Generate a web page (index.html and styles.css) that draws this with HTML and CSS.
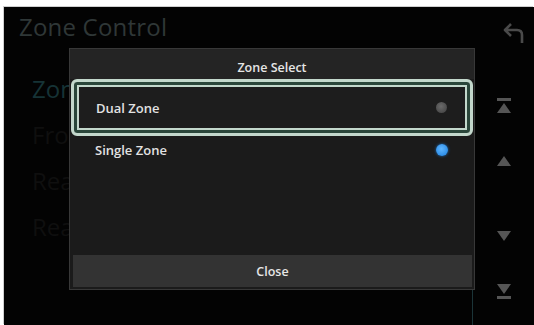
FILE: index.html
```html
<!DOCTYPE html>
<html>
<head>
<meta charset="utf-8">
<link rel="stylesheet" href="styles.css">
</head>
<body>
<div class="screen">
  <header class="topbar">
    <h1 class="title">Zone Control</h1>
    <span class="back">
      <svg width="24" height="24" viewBox="0 0 24 24"><path d="M9 3 L3 9 L9 15 M3 9 H15 Q20 9 20 14 V22" fill="none" stroke="#4a4a4a" stroke-width="2.6" stroke-linejoin="round"/></svg>
    </span>
  </header>
  <div class="main">
    <ul class="list">
      <li class="item item-active">Zone Select</li>
      <li class="item">Front</li>
      <li class="item">Rear</li>
      <li class="item">Rear</li>
    </ul>
    <nav class="side">
      <svg class="ico" width="18" height="18" viewBox="0 0 18 18"><rect x="2" y="1" width="14" height="3" fill="#555"/><path d="M9 6 L16 16 H2 Z" fill="#555"/></svg>
      <svg class="ico" width="18" height="12" viewBox="0 0 18 12"><path d="M9 1 L16 11 H2 Z" fill="#555"/></svg>
      <svg class="ico" width="18" height="12" viewBox="0 0 18 12"><path d="M9 11 L16 1 H2 Z" fill="#555"/></svg>
      <svg class="ico" width="18" height="18" viewBox="0 0 18 18"><path d="M9 12 L16 2 H2 Z" fill="#555"/><rect x="2" y="14" width="14" height="3" fill="#555"/></svg>
    </nav>
  </div>
  <div class="dialog">
    <div class="dlg-head">Zone Select</div>
    <div class="dlg-body">
      <div class="opt opt-sel"><span>Dual Zone</span><span class="dot dot-off"></span></div>
      <div class="opt"><span>Single Zone</span><span class="dot dot-on"></span></div>
    </div>
    <div class="dlg-foot"><span class="close">Close</span></div>
  </div>
</div>
</body>
</html>
```

FILE: styles.css
```css
html, body {
  margin: 0;
  padding: 0;
  background: #ffffff;
}
body {
  width: 534px;
  height: 325px;
  overflow: hidden;
}
.screen {
  position: relative;
  margin: 7px 0 0 4px;
  width: 530px;
  height: 318px;
  background: #030303;
  box-shadow: -1px -1px 0 #cfcfcf;
  display: flex;
  flex-direction: column;
  font-family: "Open Sans", "Noto Sans", sans-serif;
  overflow: hidden;
}
.topbar {
  height: 41px;
  display: flex;
  align-items: center;
  justify-content: space-between;
  padding: 0 8px 0 15px;
  box-sizing: border-box;
}
.title {
  margin: 0;
  font-weight: 400;
  font-size: 24px;
  color: #2f3737;
  letter-spacing: 0.2px;
  line-height: 1;
  margin-top: -2px;
}
.back {
  display: flex;
  margin-top: 10px;
}
.main {
  flex: 1;
  display: flex;
}
.list {
  list-style: none;
  margin: 0;
  padding: 24px 0 0 28px;
  width: 440px;
  border-right: 1px solid #1b3438;
  display: flex;
  flex-direction: column;
  gap: 12px;
}
.item {
  width: 37px;
  overflow: hidden;
  white-space: nowrap;
  font-size: 24px;
  line-height: 34px;
  color: #0f0f0f;
}
.item-active {
  color: #163336;
}
.side {
  flex: 1;
  display: flex;
  flex-direction: column;
  align-items: center;
  padding-top: 49px;
}
.side .ico:nth-child(2) { margin-top: 40px; }
.side .ico:nth-child(3) { margin-top: 63px; }
.side .ico:nth-child(4) { margin-top: 40px; }
.dialog {
  position: absolute;
  left: 65px;
  top: 41px;
  width: 406px;
  height: 242px;
  box-sizing: border-box;
  border: 1px solid #383838;
  background: #1b1b1b;
  display: flex;
  flex-direction: column;
}
.dlg-head {
  height: 30px;
  background: #242424;
  color: #e6e6e6;
  font-size: 12.5px;
  font-weight: 600;
  display: flex;
  align-items: center;
  justify-content: center;
  padding-top: 6px;
  box-sizing: border-box;
}
.dlg-body {
  flex: 1;
  display: flex;
  flex-direction: column;
}
.opt {
  height: 28px;
  display: flex;
  align-items: center;
  justify-content: space-between;
  padding: 0 26px 0 25px;
  color: #e2e2e2;
  font-size: 13px;
  font-weight: 600;
}
.opt-sel {
  height: 57px;
  border: 3px solid #c3d8cc;
  border-radius: 6px;
  box-shadow: inset 0 0 0 3px #2a463a, inset 0 0 0 5px #c3d8cc;
  background: #1d1d1d;
  padding: 0 23px 0 22px;
  margin: 0 1px;
  box-sizing: border-box;
}
.dot {
  width: 11px;
  height: 11px;
  border-radius: 50%;
}
.dot-off {
  background: radial-gradient(circle at 45% 40%, #6a6a6a, #3e3e3e);
}
.dot-on {
  background: radial-gradient(circle at 45% 40%, #5fb6ff, #1a7fe0);
  box-shadow: 0 0 3px #1a6fc0;
  width: 12px;
  height: 12px;
}
.dlg-foot {
  height: 32px;
  margin: 0 2px 2px 3px;
  background: #333333;
  display: flex;
  align-items: center;
  justify-content: center;
}
.close {
  color: #e6e6e6;
  font-size: 12.5px;
  font-weight: 600;
}
```
